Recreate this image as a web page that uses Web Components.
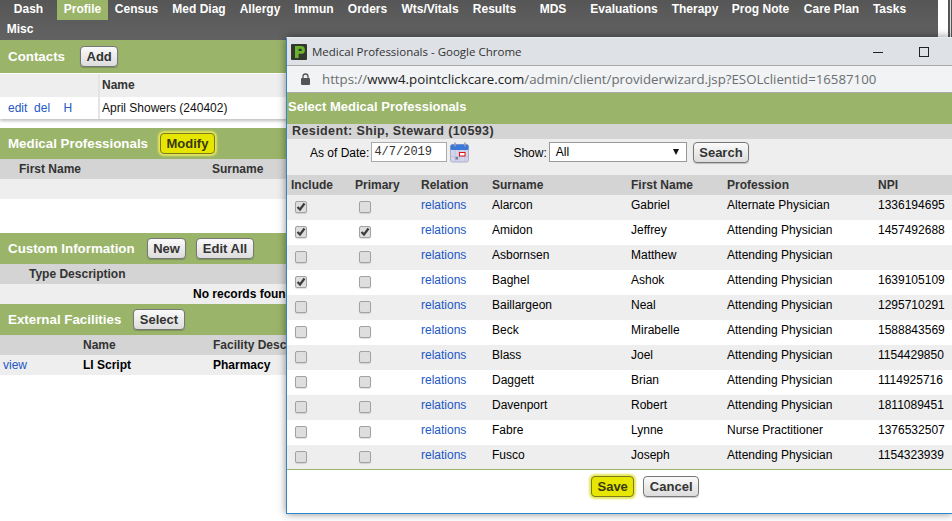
<!DOCTYPE html>
<html>
<head>
<meta charset="utf-8">
<style>
    html, body { margin: 0; height: 100%; overflow: hidden; background: #fff; }
    body { font: 12px "Liberation Sans", Arial, sans-serif; color: #000; }
</style>
</head>
<body>
<pcc-page></pcc-page>
<script>
// small shared button
class PccButton extends HTMLElement {
    constructor() { super(); this.attachShadow({ mode: "open" }); }
    connectedCallback() {
        this.shadowRoot.innerHTML = `
        <style>
            :host { display: inline-block; }
            div {
                height: 19px;
                padding: 0 5.5px;
                border: 1px solid #777;
                border-radius: 4px;
                background: linear-gradient(#fafafa, #dcdcdc);
                color: #333;
                font: bold 13px/19px "Liberation Sans", Arial, sans-serif;
                box-shadow: 0 1px 1px rgba(0,0,0,.2);
            }
            :host([hot]) div {
                background: #e6e600;
                border-color: #7a7a20;
                color: #3a3a10;
                box-shadow: 0 0 2px 2px #e6e65a;
            }
        </style>
        <div><slot></slot></div>`;
    }
}
customElements.define("pcc-button", PccButton);

// top tabs
class PccNav extends HTMLElement {
    constructor() { super(); this.attachShadow({ mode: "open" }); }
    connectedCallback() {
        const tabs = [["Dash",57],["Profile",51],["Census",57],["Med Diag",68],["Allergy",54],["Immun",54],["Orders",53],["Wts/Vitals",72],["Results",57],["MDS",60],["Evaluations",82],["Therapy",60],["Prog Note",71],["Care Plan",71],["Tasks",45],["Misc",40]];
        this.shadowRoot.innerHTML = `
        <style>
            :host { display: flex; flex-wrap: wrap; width: 938px; height: 40px; background: linear-gradient(#565656, #626262); }
            span { height: 20px; line-height: 19px; text-align: center; color: #fff; font-weight: bold; font-size: 12px; }
            .on { background: #9ab46a; }
        </style>
        ${tabs.map(([t, w]) => `<span style="width:${w}px" class="${t == "Profile" ? "on" : ""}">${t}</span>`).join("")}`;
    }
}
customElements.define("pcc-nav", PccNav);

// green section bar, buttons go in the slot
class PccBar extends HTMLElement {
    constructor() { super(); this.attachShadow({ mode: "open" }); }
    connectedCallback() {
        this.shadowRoot.innerHTML = `
        <style>
            :host { display: flex; align-items: center; gap: var(--g, 12px); height: var(--h, 31px); padding-left: 8px; background: #9ab46a; color: #fff; font-weight: bold; font-size: 13.33px; }
            span { padding-bottom: 1px; }
            .btns { display: flex; gap: 10px; }
        </style>
        <span>${this.getAttribute("title")}</span>
        <div class="btns"><slot></slot></div>`;
    }
}
customElements.define("pcc-bar", PccBar);

// grid row: columns passed as a template, cells as children
class PccRow extends HTMLElement {
    constructor() { super(); this.attachShadow({ mode: "open" }); }
    connectedCallback() {
        this.shadowRoot.innerHTML = `
        <style>
            :host { display: grid; grid-template-columns: var(--cols); align-items: center; height: var(--rh, 20px); font-size: 12px; box-sizing: border-box; }
            :host([head]) { background: #d4d4d4; color: #333; font-weight: bold; }
            :host([odd]) { background: #eee; }
        </style>
        <slot></slot>`;
    }
}
customElements.define("pcc-row", PccRow);

// checkbox, disabled looking
class PccCheck extends HTMLElement {
    constructor() { super(); this.attachShadow({ mode: "open" }); }
    connectedCallback() {
        const tick = this.hasAttribute("checked") ? `<svg width="10" height="10" viewBox="0 0 10 10"><path d="M1.500 5 4 7.500 8.500 1.500" fill="none" stroke="#3c3c3c" stroke-width="2.200"/></svg>` : "";
        this.shadowRoot.innerHTML = `
        <style>
            :host { display: block; width: 10px; height: 10px; margin-left: 8px; margin-top: -1px; border: 1px solid #a2a2a2; border-radius: 2px; background: #dedede; box-shadow: 0 1px 1px rgba(0,0,0,.12); }
            svg { display: block; }
        </style>${tick}`;
    }
}
customElements.define("pcc-check", PccCheck);

// the popup
class ProviderWindow extends HTMLElement {
    constructor() { super(); this.attachShadow({ mode: "open" }); }
    connectedCallback() {
        const people = [
            [1,0,"Alarcon","Gabriel","Alternate Physician","1336194695"],
            [1,1,"Amidon","Jeffrey","Attending Physician","1457492688"],
            [0,0,"Asbornsen","Matthew","Attending Physician",""],
            [1,0,"Baghel","Ashok","Attending Physician","1639105109"],
            [0,0,"Baillargeon","Neal","Attending Physician","1295710291"],
            [0,0,"Beck","Mirabelle","Attending Physician","1588843569"],
            [0,0,"Blass","Joel","Attending Physician","1154429850"],
            [0,0,"Daggett","Brian","Attending Physician","1114925716"],
            [0,0,"Davenport","Robert","Attending Physician","1811089451"],
            [0,0,"Fabre","Lynne","Nurse Practitioner","1376532507"],
            [0,0,"Fusco","Joseph","Attending Physician","1154323939"]
        ];
        const rows = people.map((p, i) => `
            <pcc-row ${i % 2 ? "" : "odd"} style="--rh:25px">
                <pcc-check ${p[0] ? "checked" : ""}></pcc-check>
                <pcc-check ${p[1] ? "checked" : ""}></pcc-check>
                <a href="#">relations</a>
                <span>${p[2]}</span><span>${p[3]}</span><span>${p[4]}</span><span>${p[5]}</span>
            </pcc-row>`).join("");
        this.shadowRoot.innerHTML = `
        <style>
            :host {
                position: absolute; left: 286px; top: 37px; width: 666px; height: 477px;
                box-sizing: border-box; display: flex; flex-direction: column;
                border: solid #2f86c8; border-width: 1px 0 1px 1px;
                border-top-color: #e8eaed;
                background: #fff;
                box-shadow: 0 0 8px rgba(0,0,0,.45);
                --cols: 64px 70px 71px 139px 96px 151px 1fr;
            }
            .title { display: flex; align-items: center; height: 28px; background: #dee1e6; padding-left: 4px; gap: 5px; color: #333; font: 11.5px "Open Sans", sans-serif; border-bottom: 1px solid #aaa; box-sizing: border-box; }
            .winbtns { margin-left: auto; margin-right: 22px; display: flex; }
            .url { display: flex; align-items: center; height: 27px; background: #f1f3f4; padding-left: 14px; gap: 12px; color: #6a6e72; font: 13.25px "Open Sans", sans-serif; border-bottom: 1px solid #aaa; box-sizing: border-box; }
            .url b { font-weight: normal; color: #222; }
            .head { height: 31px; line-height: 27px; background: #9ab46a; color: #fff; font-weight: bold; font-size: 13px; padding-left: 1px; box-sizing: border-box; }
            .res { height: 15px; line-height: 14px; background: #d4d4d4; color: #333; font-weight: bold; font-size: 12.5px; padding-left: 5px; letter-spacing: .4px; }
            .form { display: flex; align-items: flex-start; height: 36px; background: #eee; padding: 3px 0 0 23px; box-sizing: border-box; font-size: 12px; }
            .form label { line-height: 20px; margin-top: 1px; }
            .date { width: 72px; height: 18px; margin-left: 2px; border: 1px solid #aaa; background: #fff; font: 12px/18px "Liberation Mono", monospace; color: #333; padding-left: 2px; }
            .sel { position: relative; width: 130px; height: 18px; margin: 0 6px 0 2px; border: 1px solid #999; background: #fff; line-height: 18px; padding-left: 6px; }
            .sel i { position: absolute; right: 7px; top: 6px; border: solid transparent; border-width: 6px 3.5px 0; border-top-color: #111; }
            .list { flex: none; height: 294px; overflow: hidden; border-bottom: 1px solid #9ab46a; }
            a { color: #2257c5; text-decoration: none; }
            .list a, .list span { margin-top: -5px; }
            .list pcc-row[head] span { margin-top: 0; }
            .foot { display: flex; justify-content: center; gap: 9px; padding: 6px 0 0 51px; }
        </style>
        <div class="title">
            <svg width="16" height="16" viewBox="0 0 16 16"><rect width="16" height="16" rx="1" fill="#33382f"/><path d="M4 14V2h6a3.800 3.800 0 0 1 0 7.800H7.600V14Z" fill="#6bb32e"/><path d="M7.600 4.800v2.300H9.800a1.150 1.150 0 0 0 0-2.300Z" fill="#33382f"/></svg>
            <span>Medical Professionals - Google Chrome</span>
            <div class="winbtns">
                <svg width="57" height="12" viewBox="0 0 57 12"><path d="M0 6.500h10" stroke="#222"/><rect x="46.500" y="1.500" width="9" height="9" fill="none" stroke="#222"/></svg>
            </div>
        </div>
        <div class="url">
            <svg width="9" height="12" viewBox="0 0 9 12"><path d="M2 5V3.500a2.500 2.500 0 0 1 5 0V5" fill="none" stroke="#555" stroke-width="1.300"/><rect y="5" width="9" height="7" rx="1" fill="#555"/></svg>
            <span>https://<b>www4.pointclickcare.com</b>/admin/client/providerwizard.jsp?ESOLclientid=16587100</span>
        </div>
        <div class="head">Select Medical Professionals</div>
        <div class="res">Resident: Ship, Steward (10593)</div>
        <div class="form">
            <label>As of Date:</label><div class="date">4/7/2019</div>
            <svg style="margin:0 0 0 3px" width="19" height="21" viewBox="0 0 19 21">
                <rect x=".5" y="2.500" width="18" height="17.500" rx="2" fill="#d3d6ea" stroke="#a9aecb"/>
                <rect x=".5" y="2.500" width="18" height="5.500" rx="1.500" fill="#3b78d8"/>
                <path d="M5 .5v4M15 .5v4" stroke="#9a9fb5" stroke-width="1.600"/>
                <path d="M1 14.500h17M5 8v12M9 8v12M15 8v12" stroke="#bfc3dc"/>
                <rect x="9.500" y="10.500" width="5.500" height="3.500" fill="#fff" stroke="#e01010"/>
                <rect x="5.500" y="15" width="2.500" height="2.500" fill="#777a9a"/>
            </svg>
            <label style="margin-left:44px">Show:</label><div class="sel">All<i></i></div>
            <pcc-button>Search</pcc-button>
        </div>
        <div class="list">
            <pcc-row head><span style="padding-left:4px">Include</span><span style="padding-left:4px">Primary</span><span>Relation</span><span>Surname</span><span>First Name</span><span>Profession</span><span>NPI</span></pcc-row>
            ${rows}
        </div>
        <div class="foot"><pcc-button hot>Save</pcc-button><pcc-button>Cancel</pcc-button></div>`;
    }
}
customElements.define("provider-window", ProviderWindow);

class PccPage extends HTMLElement {
    constructor() { super(); this.attachShadow({ mode: "open" }); }
    connectedCallback() {
        this.shadowRoot.innerHTML = `
        <style>
            :host { display: block; position: relative; width: 952px; height: 521px; overflow: hidden; background: #fff; }
            .top { height: 40px; background: linear-gradient(to right, #fff 948px, #555 948px 950px, #ddd 950px 951px, #555 951px); }
            .contacts { height: 45px; margin: 1px 0 9px; box-shadow: 0 2px 3px rgba(0,0,0,.25); background: #fff; --cols: 98px 1fr; }
            a { color: #2257c5; text-decoration: none; word-spacing: 2px; }
            .gap { height: 34px; }
            .sep { border-left: 2px solid #e4e4e4; padding-left: 2px; }
        </style>
        <div class="top"><pcc-nav></pcc-nav></div>
        <pcc-bar title="Contacts" style="--h:33px;--g:15px"><pcc-button>Add</pcc-button></pcc-bar>
        <div class="contacts">
            <pcc-row head style="--rh:23px;background:#eee"><span></span><span class="sep" style="line-height:23px">Name</span></pcc-row>
            <pcc-row style="--rh:22px"><span style="padding-left:8px"><a href="#">edit</a>&nbsp; <a href="#">del</a> &nbsp; &nbsp;<a href="#">H</a></span><span class="sep" style="line-height:22px;color:#111">April Showers (240402)</span></pcc-row>
        </div>
        <pcc-bar title="Medical Professionals"><pcc-button hot>Modify</pcc-button></pcc-bar>
        <pcc-row head style="--cols:19px 193px 1fr"><span></span><span>First Name</span><span>Surname</span></pcc-row>
        <pcc-row odd></pcc-row>
        <div class="gap"></div>
        <pcc-bar title="Custom Information"><pcc-button>New</pcc-button><pcc-button>Edit All</pcc-button></pcc-bar>
        <pcc-row head style="--cols:29px 1fr"><span></span><span>Type Description</span></pcc-row>
        <pcc-row odd style="--cols:193px 1fr;font-weight:bold"><span></span><span>No records found</span></pcc-row>
        <pcc-bar title="External Facilities"><pcc-button>Select</pcc-button></pcc-bar>
        <pcc-row head style="--cols:83px 130px 1fr"><span></span><span>Name</span><span>Facility Description</span></pcc-row>
        <pcc-row odd style="--cols:3px 80px 130px 1fr"><span></span><a href="#">view</a><b>LI Script</b><b>Pharmacy</b></pcc-row>
        <provider-window></provider-window>`;
    }
}
customElements.define("pcc-page", PccPage);
</script>
</body>
</html>
